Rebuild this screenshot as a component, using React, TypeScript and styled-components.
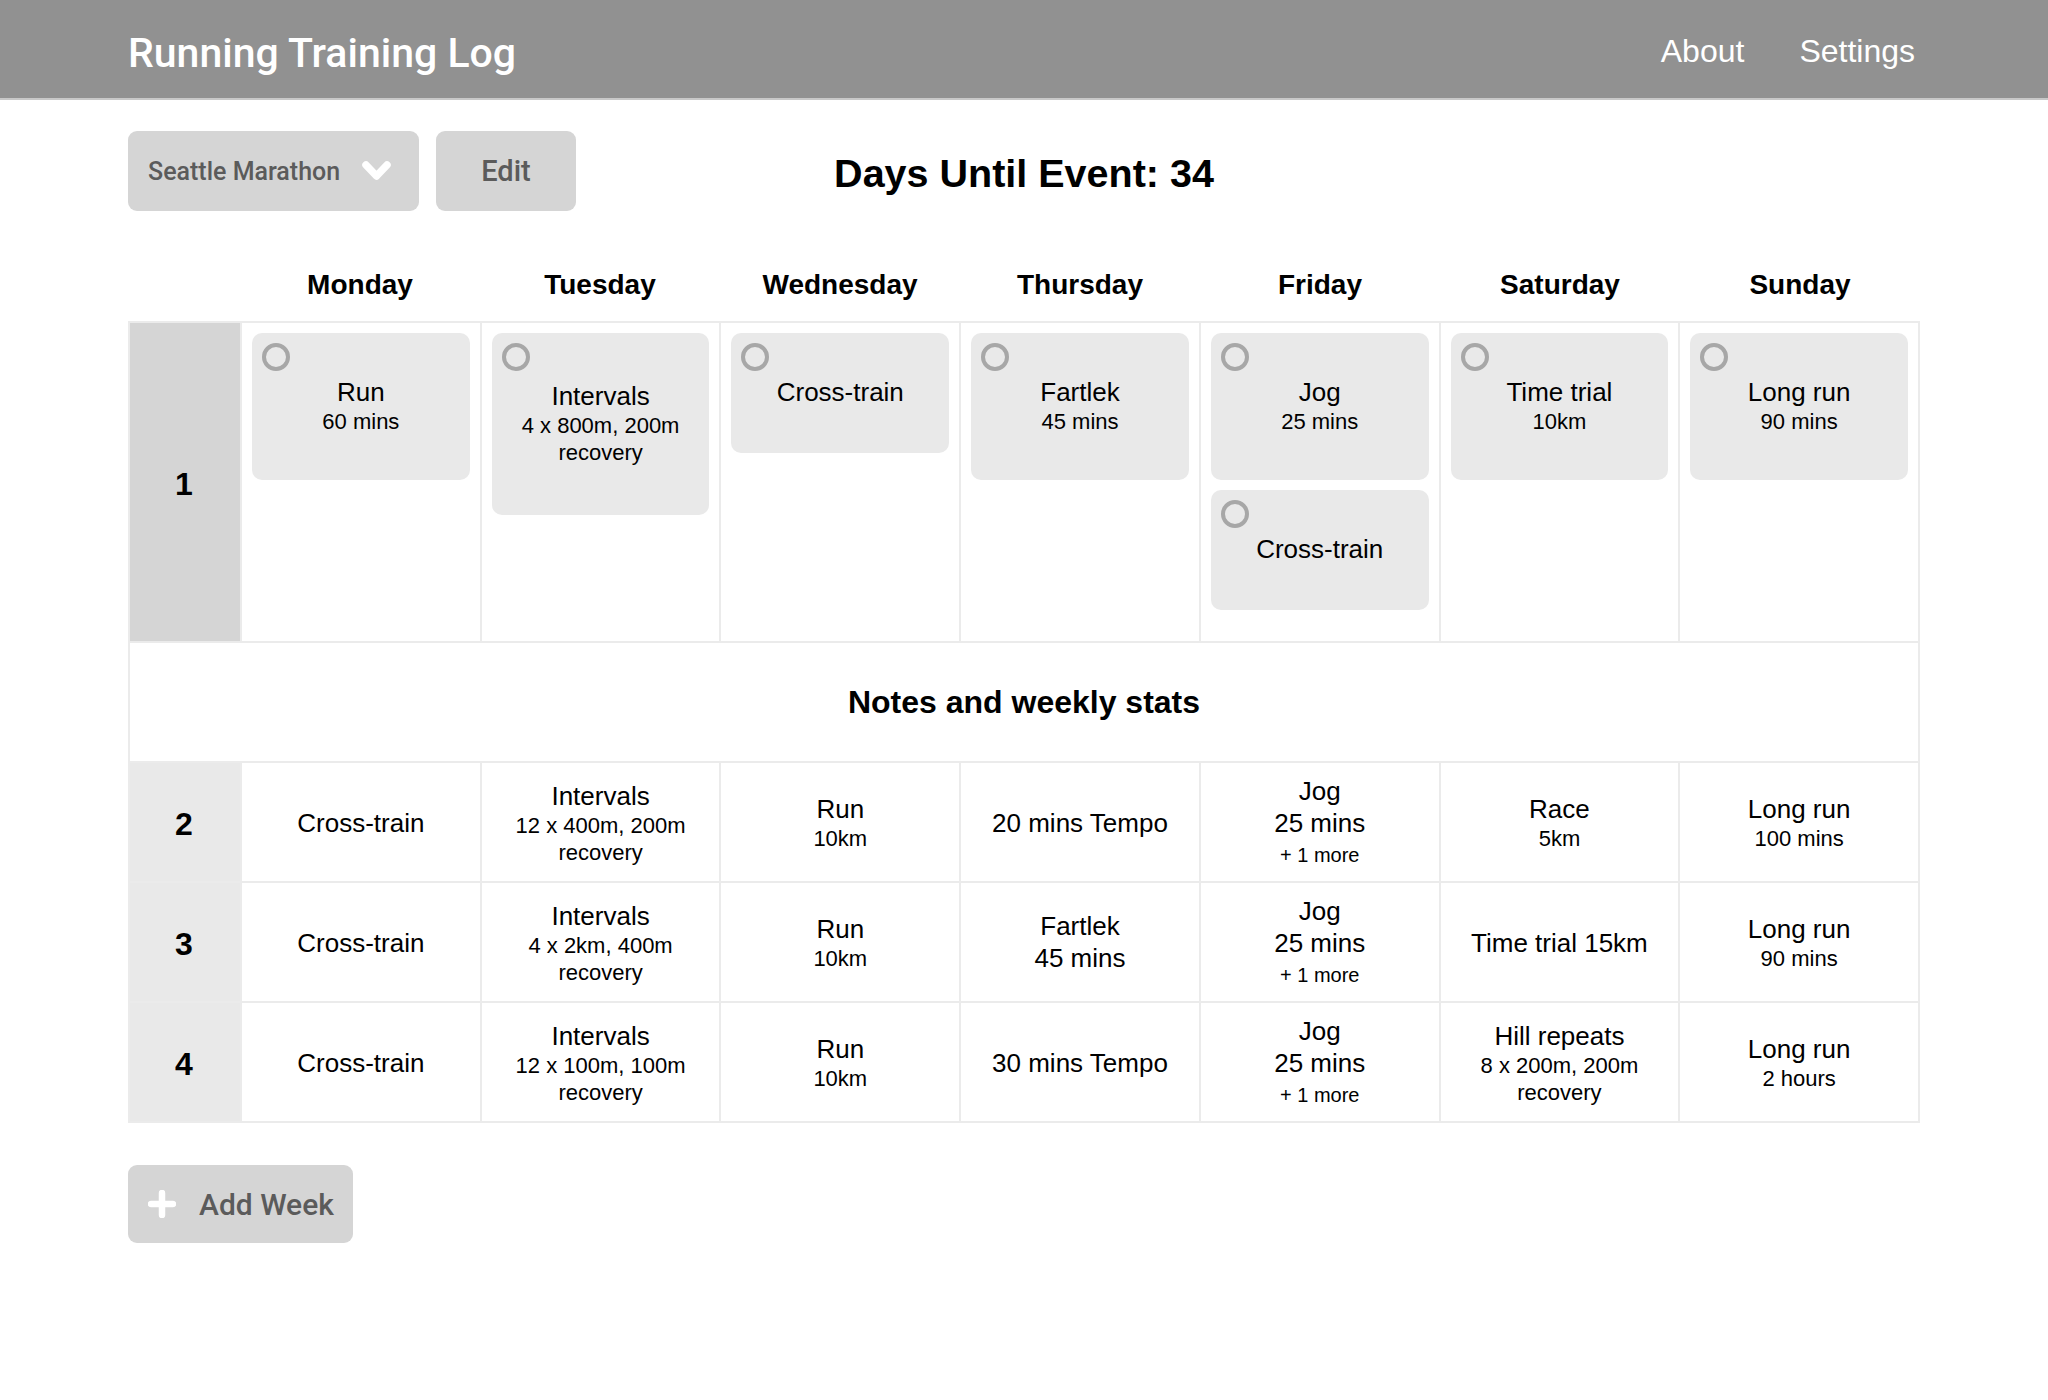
import React from 'react'
import styled, { createGlobalStyle } from 'styled-components'

const GlobalStyle = createGlobalStyle`
    *, *::before, *::after {
        box-sizing: border-box;
    }
    body {
        margin: 0;
        background: #ffffff;
        color: #000000;
        font-family: "Liberation Sans", Arial, Helvetica, sans-serif;
    }
`

interface Activity {
    title: string
    detail?: string
}

interface Summary {
    title: string
    detail?: string
    big?: boolean
    more?: number
}

const DAYS = ['Monday', 'Tuesday', 'Wednesday', 'Thursday', 'Friday', 'Saturday', 'Sunday']

const currentWeek: Activity[][] = [
    [{ title: 'Run', detail: '60 mins' }],
    [{ title: 'Intervals', detail: '4 x 800m, 200m recovery' }],
    [{ title: 'Cross-train' }],
    [{ title: 'Fartlek', detail: '45 mins' }],
    [{ title: 'Jog', detail: '25 mins' }, { title: 'Cross-train' }],
    [{ title: 'Time trial', detail: '10km' }],
    [{ title: 'Long run', detail: '90 mins' }],
]

const laterWeeks: { week: number; days: Summary[] }[] = [
    {
        week: 2,
        days: [
            { title: 'Cross-train' },
            { title: 'Intervals', detail: '12 x 400m, 200m recovery' },
            { title: 'Run', detail: '10km' },
            { title: '20 mins Tempo' },
            { title: 'Jog', detail: '25 mins', big: true, more: 1 },
            { title: 'Race', detail: '5km' },
            { title: 'Long run', detail: '100 mins' },
        ],
    },
    {
        week: 3,
        days: [
            { title: 'Cross-train' },
            { title: 'Intervals', detail: '4 x 2km, 400m recovery' },
            { title: 'Run', detail: '10km' },
            { title: 'Fartlek', detail: '45 mins', big: true },
            { title: 'Jog', detail: '25 mins', big: true, more: 1 },
            { title: 'Time trial 15km' },
            { title: 'Long run', detail: '90 mins' },
        ],
    },
    {
        week: 4,
        days: [
            { title: 'Cross-train' },
            { title: 'Intervals', detail: '12 x 100m, 100m recovery' },
            { title: 'Run', detail: '10km' },
            { title: '30 mins Tempo' },
            { title: 'Jog', detail: '25 mins', big: true, more: 1 },
            { title: 'Hill repeats', detail: '8 x 200m, 200m recovery' },
            { title: 'Long run', detail: '2 hours' },
        ],
    },
]

const TopBar = styled.header`
    display: flex;
    align-items: center;
    justify-content: space-between;
    height: 100px;
    padding: 4px 133px 0 128px;
    background: #919191;
    border-bottom: 2px solid #c8c8c8;
`

const AppTitle = styled.h1`
    margin: 4px 0 0;
    font-family: Roboto, "Liberation Sans", Arial, sans-serif;
    font-size: 41px;
    font-weight: 500;
    color: #ffffff;
`

const Nav = styled.nav`
    display: flex;
    gap: 55px;
`

const NavLink = styled.a`
    font-size: 32px;
    color: #ffffff;
    text-decoration: none;
    cursor: pointer;
`

const Main = styled.main`
    padding: 31px 128px 60px;
`

const Toolbar = styled.div`
    display: grid;
    grid-template-columns: 1fr auto 1fr;
    align-items: center;
    height: 80px;
`

const Controls = styled.div`
    display: flex;
    gap: 17px;
    height: 100%;
`

const GreyButton = styled.button`
    display: flex;
    align-items: center;
    height: 100%;
    border: none;
    border-radius: 9px;
    background: #d5d5d5;
    color: #5b5b5b;
    font-family: Roboto, "Liberation Sans", Arial, sans-serif;
    font-weight: 500;
    cursor: pointer;
`

const EventSelect = styled(GreyButton)`
    width: 291px;
    justify-content: space-between;
    padding: 0 27px 0 20px;
    font-size: 25px;
`

const EditButton = styled(GreyButton)`
    width: 140px;
    justify-content: center;
    font-size: 29px;
`

const Countdown = styled.h2`
    margin: 0;
    padding-top: 4px;
    font-size: 39.5px;
    font-weight: 700;
    text-align: center;
`

const Grid = styled.div`
    display: grid;
    grid-template-columns: 112px repeat(7, 1fr);
`

const DayHeader = styled.div`
    display: flex;
    align-items: center;
    justify-content: center;
    height: 72px;
    margin-top: 38px;
    font-size: 28px;
    font-weight: 700;
`

const Table = styled(Grid)`
    border-top: 2px solid #ebebeb;
    border-left: 2px solid #ebebeb;
`

const Cell = styled.div<{ $tall?: boolean }>`
    height: ${({ $tall }) => ($tall ? '320px' : '120px')};
    border-right: 2px solid #ebebeb;
    border-bottom: 2px solid #ebebeb;
`

const WeekNumber = styled(Cell)<{ $current?: boolean }>`
    display: flex;
    align-items: center;
    justify-content: center;
    padding: 4px 2px 0 0;
    background: ${({ $current }) => ($current ? '#d5d5d5' : '#e9e9e9')};
    font-size: 32px;
    font-weight: 700;
`

const DayColumn = styled(Cell)`
    display: flex;
    flex-direction: column;
    gap: 10px;
    padding: 10px;
`

const ActivityCard = styled.div<{ $wrapped?: boolean }>`
    position: relative;
    padding: ${({ $wrapped }) => ($wrapped ? '48px 10px 49px' : '44px 10px 45px')};
    border-radius: 10px;
    background: #e9e9e9;
    text-align: center;
`

const Check = styled.span`
    position: absolute;
    top: 10px;
    left: 10px;
    width: 28px;
    height: 28px;
    border: 4px solid #a7a7a7;
    border-radius: 50%;
`

const Title = styled.div`
    font-size: 26px;
    line-height: 31px;
`

const Detail = styled.div<{ $big?: boolean }>`
    font-size: ${({ $big }) => ($big ? '26px' : '22px')};
    line-height: ${({ $big }) => ($big ? '33px' : '27px')};
`

const More = styled.div`
    font-size: 20px;
    line-height: 30px;
`

const SummaryCell = styled(Cell)`
    display: flex;
    flex-direction: column;
    align-items: center;
    justify-content: center;
    padding: 2px 16px 0;
    text-align: center;
`

const NotesRow = styled(Cell)`
    grid-column: 1 / -1;
    display: flex;
    align-items: center;
    justify-content: center;
    font-size: 32px;
    font-weight: 700;
`

const AddWeekButton = styled(GreyButton)`
    gap: 23px;
    height: 78px;
    margin-top: 42px;
    padding: 0 19px 0 20px;
    font-size: 30px;
`

const Chevron = () => (
    <svg width="31" height="22" viewBox="0 0 31 22" fill="none">
        <path d="M5 5 L15.5 16 L26 5" stroke="#ffffff" strokeWidth="7.5" strokeLinecap="round" strokeLinejoin="round" />
    </svg>
)

const Plus = () => (
    <svg width="28" height="28" viewBox="0 0 28 28" fill="none">
        <path d="M14 3 V25 M3 14 H25" stroke="#ffffff" strokeWidth="6.5" strokeLinecap="round" />
    </svg>
)

const App: React.FC = () => {
    return (
        <>
            <GlobalStyle />
            <TopBar>
                <AppTitle>Running Training Log</AppTitle>
                <Nav>
                    <NavLink>About</NavLink>
                    <NavLink>Settings</NavLink>
                </Nav>
            </TopBar>
            <Main>
                <Toolbar>
                    <Controls>
                        <EventSelect>
                            Seattle Marathon
                            <Chevron />
                        </EventSelect>
                        <EditButton>Edit</EditButton>
                    </Controls>
                    <Countdown>Days Until Event: 34</Countdown>
                    <div />
                </Toolbar>

                <Grid>
                    <div />
                    {DAYS.map((day) => (
                        <DayHeader key={day}>{day}</DayHeader>
                    ))}
                </Grid>

                <Table>
                    <WeekNumber $tall $current>1</WeekNumber>
                    {currentWeek.map((activities, i) => (
                        <DayColumn $tall key={DAYS[i]}>
                            {activities.map((a) => (
                                <ActivityCard key={a.title} $wrapped={(a.detail ?? '').length > 16}>
                                    <Check />
                                    <Title>{a.title}</Title>
                                    {a.detail && <Detail>{a.detail}</Detail>}
                                </ActivityCard>
                            ))}
                        </DayColumn>
                    ))}

                    <NotesRow>Notes and weekly stats</NotesRow>

                    {laterWeeks.map(({ week, days }) => (
                        <React.Fragment key={week}>
                            <WeekNumber>{week}</WeekNumber>
                            {days.map((d, i) => (
                                <SummaryCell key={DAYS[i]}>
                                    <Title>{d.title}</Title>
                                    {d.detail && <Detail $big={d.big}>{d.detail}</Detail>}
                                    {d.more && <More>+ {d.more} more</More>}
                                </SummaryCell>
                            ))}
                        </React.Fragment>
                    ))}
                </Table>

                <AddWeekButton>
                    <Plus />
                    Add Week
                </AddWeekButton>
            </Main>
        </>
    )
}

export default App
